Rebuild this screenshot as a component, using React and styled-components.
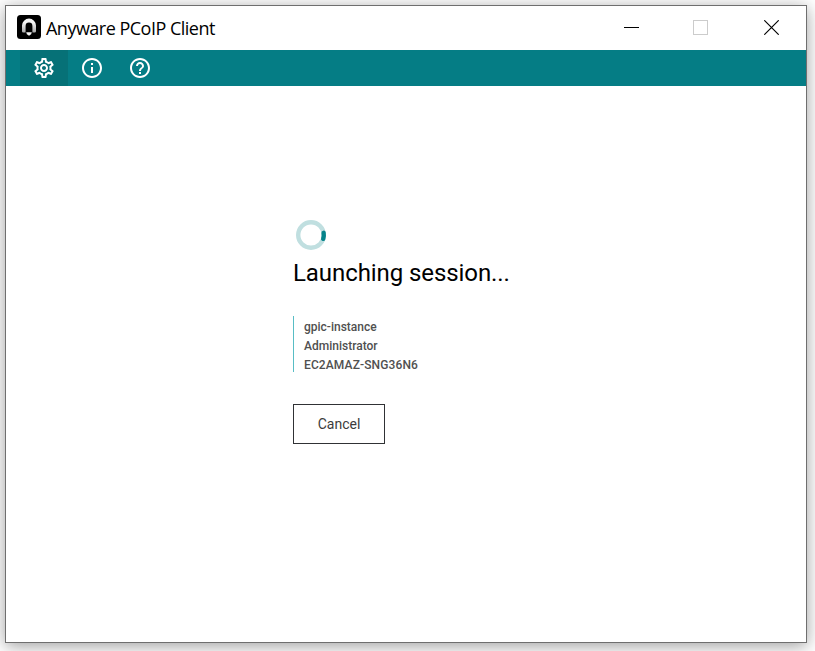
import React from "react";
import styled, { createGlobalStyle } from "styled-components";
import { MdOutlineSettings, MdInfoOutline, MdHelpOutline } from "react-icons/md";

const GlobalStyle = createGlobalStyle`
  * { box-sizing: border-box; }
  body { margin: 0; background: #fff; overflow: hidden; }
`;

const Desktop = styled.div`
  height: 651px;
  padding: 5px 8px 8px 5px;
`;

const Window = styled.main`
  display: flex;
  flex-direction: column;
  width: 802px;
  height: 638px;
  border: 1px solid #6f6f6f;
  background: #fff;
  box-shadow: 0 3px 16px rgba(0, 0, 0, 0.38);
  font-family: Roboto, "Liberation Sans", sans-serif;
`;

const TitleBar = styled.header`
  display: flex;
  flex: 0 0 44px;
  align-items: center;
  padding-left: 11px;
`;

const AppIcon = styled.svg`
  width: 24px;
  height: 24px;
  margin-top: -2px;
`;

const Title = styled.h1`
  flex: 1;
  margin: 0 0 0 5px;
  font: 400 18px/24px "Open Sans", "Noto Sans", sans-serif;
  letter-spacing: -0.51px;
  color: #000;
`;

const WindowControls = styled.div`
  display: flex;
  height: 44px;
  padding-bottom: 2px;
`;

const ControlButton = styled.button`
  display: flex;
  align-items: center;
  justify-content: center;
  width: ${({ $width }) => $width}px;
  padding: 0;
  border: 0;
  background: transparent;
  color: ${({ disabled }) => (disabled ? "#ccc" : "#000")};

  svg { display: block; }
`;

const Toolbar = styled.nav`
  display: flex;
  flex: 0 0 36px;
  padding-left: 14px;
  background: #057d85;
`;

const ToolButton = styled.button`
  display: flex;
  align-items: center;
  justify-content: center;
  width: 48px;
  padding: 0;
  border: 0;
  background: ${({ $active }) => ($active ? "#067177" : "transparent")};
  color: #fff;
  font-size: 24px;
`;

const Content = styled.section`
  display: flex;
  flex-direction: column;
  align-items: flex-start;
  padding: 131px 0 0 287px;
`;

const Spinner = styled.svg`
  width: 36px;
  height: 36px;
`;

const Status = styled.h2`
  margin: 4px 0 0;
  font-size: 24px;
  line-height: 32px;
  font-weight: 400;
  letter-spacing: -0.08px;
  color: #000;
`;

const SessionDetails = styled.ul`
  margin: 27px 0 0;
  padding: 2px 0 0 10px;
  height: 56px;
  border-left: 1px solid #58bdc5;
  list-style: none;
`;

const Detail = styled.li`
  font-size: 12px;
  line-height: 19px;
  font-weight: 500;
  letter-spacing: ${({ $spacing }) => $spacing || "normal"};
  color: #505050;
`;

const CancelButton = styled.button`
  width: 92px;
  height: 40px;
  margin-top: 32px;
  padding: 0;
  border: 1px solid #303235;
  background: #fff;
  color: #3c3c3c;
  font: 400 14px/20px Roboto, sans-serif;
`;

const details = [
  { text: "gpic-instance" },
  { text: "Administrator" },
  { text: "EC2AMAZ-SNG36N6", spacing: "0.12px" },
];

export default function App() {
  return (
    <Desktop>
      <GlobalStyle />
      <Window>
        <TitleBar>
          <AppIcon viewBox="0 0 24 24">
            <defs>
              <linearGradient id="arch" x1="0" y1="0" x2="0" y2="1">
                <stop offset="0.3" stopColor="#f4f4f4" />
                <stop offset="1" stopColor="#a8a8a8" />
              </linearGradient>
            </defs>
            <rect width="24" height="24" rx="3.5" fill="#000" />
            <path
              d="M6.3 17.6Q5 17.6 5 16.2V10.6a7 7 0 0 1 14 0v5.6q0 1.4-1.3 1.4H15.4V11a3.4 3.4 0 0 0-6.8 0v6.6Z"
              fill="url(#arch)"
            />
            <path d="M9.2 17.2H14.8Q14.8 19.4 12 20.7Q9.2 19.4 9.2 17.2Z" fill="#f4f4f4" />
          </AppIcon>
          <Title>Anyware PCoIP Client</Title>
          <WindowControls>
            <ControlButton aria-label="Minimize" $width={65}>
              <svg width="15" height="15"><path d="M0 7.5H15" stroke="currentColor" /></svg>
            </ControlButton>
            <ControlButton aria-label="Maximize" $width={73} disabled>
              <svg width="15" height="15"><rect x=".5" y=".5" width="14" height="14" fill="none" stroke="currentColor" /></svg>
            </ControlButton>
            <ControlButton aria-label="Close" $width={69}>
              <svg width="15" height="15"><path d="M.3.3 14.7 14.7M14.7.3.3 14.7" stroke="currentColor" strokeWidth="1.15" /></svg>
            </ControlButton>
          </WindowControls>
        </TitleBar>
        <Toolbar>
          <ToolButton $active aria-label="Settings"><MdOutlineSettings /></ToolButton>
          <ToolButton aria-label="Information"><MdInfoOutline /></ToolButton>
          <ToolButton aria-label="Help"><MdHelpOutline /></ToolButton>
        </Toolbar>
        <Content>
          <Spinner viewBox="0 0 36 36" fill="none">
            <circle cx="18" cy="18" r="12.8" stroke="#c0dfe0" strokeWidth="4.4" />
            <path d="M30.6 15.8a12.8 12.8 0 0 1-.4 6" stroke="#05838a" strokeWidth="4.4" strokeLinecap="round" />
          </Spinner>
          <Status>Launching session...</Status>
          <SessionDetails>
            {details.map(({ text, spacing }) => (
              <Detail key={text} $spacing={spacing}>{text}</Detail>
            ))}
          </SessionDetails>
          <CancelButton>Cancel</CancelButton>
        </Content>
      </Window>
    </Desktop>
  );
}
